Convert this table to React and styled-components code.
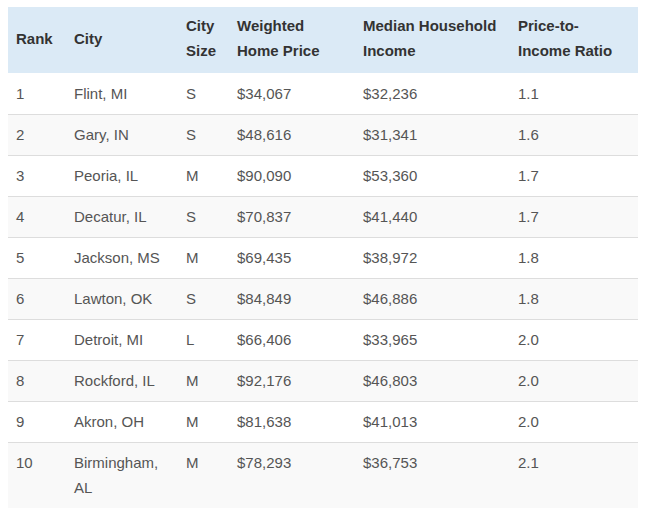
import React from "react";
import styled, { createGlobalStyle } from "styled-components";

const Global = createGlobalStyle`
  html, body { margin: 0; padding: 0; background: #ffffff; }
  body { font-family: "Liberation Sans", Arial, sans-serif; }
`;

const Wrap = styled.div`
  padding: 7px 12px 0 8px;
`;

const Table = styled.table`
  width: 630px;
  border-collapse: collapse;
  table-layout: fixed;
  font-size: 15px;
  line-height: 25px;
  color: #555555;
`;

const HeadCell = styled.th`
  background: #dbeaf6;
  color: #333333;
  font-weight: bold;
  text-align: left;
  vertical-align: middle;
  padding: 6px 8px 9px;
`;

const Row = styled.tr`
  background: ${(p) => (p.$odd ? "#f9f9f9" : "#ffffff")};
`;

const Cell = styled.td`
  text-align: left;
  vertical-align: top;
  padding: ${(p) => (p.$first ? "8px 8px 8px" : "7px 8px 8px")};
  border-top: 1px solid ${(p) => (p.$first ? "transparent" : "#dddddd")};
`;

const cols = [58, 112, 51, 126, 155, 128];

const headers = [
  "Rank",
  "City",
  "City Size",
  "Weighted Home Price",
  "Median Household Income",
  "Price-to- Income Ratio",
];

const rows = [
  ["1", "Flint, MI", "S", "$34,067", "$32,236", "1.1"],
  ["2", "Gary, IN", "S", "$48,616", "$31,341", "1.6"],
  ["3", "Peoria, IL", "M", "$90,090", "$53,360", "1.7"],
  ["4", "Decatur, IL", "S", "$70,837", "$41,440", "1.7"],
  ["5", "Jackson, MS", "M", "$69,435", "$38,972", "1.8"],
  ["6", "Lawton, OK", "S", "$84,849", "$46,886", "1.8"],
  ["7", "Detroit, MI", "L", "$66,406", "$33,965", "2.0"],
  ["8", "Rockford, IL", "M", "$92,176", "$46,803", "2.0"],
  ["9", "Akron, OH", "M", "$81,638", "$41,013", "2.0"],
  ["10", "Birmingham, AL", "M", "$78,293", "$36,753", "2.1"],
];

export default function App() {
  return (
    <>
      <Global />
      <Wrap>
        <Table>
          <colgroup>
            {cols.map((w, i) => (
              <col key={i} style={{ width: w }} />
            ))}
          </colgroup>
          <thead>
            <tr>
              {headers.map((h) => (
                <HeadCell key={h}>{h}</HeadCell>
              ))}
            </tr>
          </thead>
          <tbody>
            {rows.map((r, i) => (
              <Row key={r[0]} $odd={i % 2 === 1}>
                {r.map((c, j) => (
                  <Cell key={j} $first={i === 0}>
                    {c}
                  </Cell>
                ))}
              </Row>
            ))}
          </tbody>
        </Table>
      </Wrap>
    </>
  );
}
